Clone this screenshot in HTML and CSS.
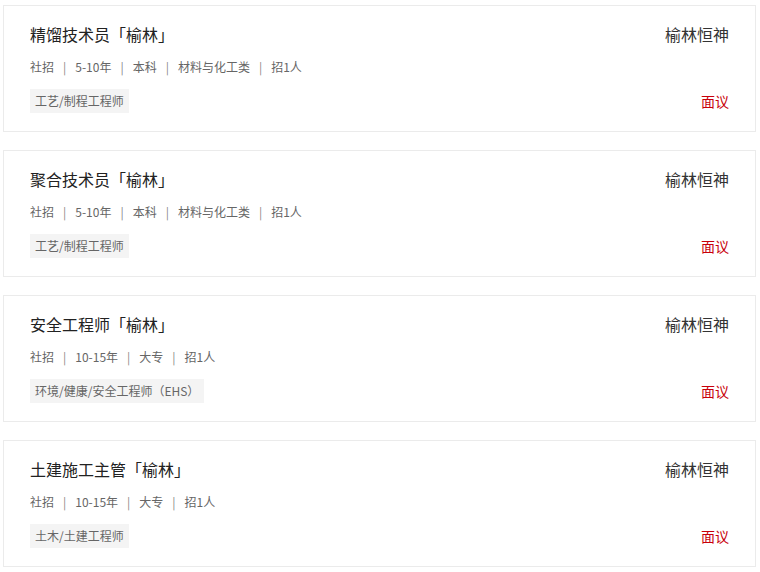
FILE: index.html
```html
<!DOCTYPE html>
<html lang="zh">
<head>
<meta charset="utf-8">
<link rel="stylesheet" href="styles.css">
</head>
<body>
<div class="list">
  <div class="card">
    <div class="row">
      <div class="title">精馏技术员「榆林」</div>
      <div class="company">榆林恒神</div>
    </div>
    <div class="meta"><span>社招</span><i>|</i><span>5-10年</span><i>|</i><span>本科</span><i>|</i><span>材料与化工类</span><i>|</i><span>招1人</span></div>
    <div class="row bottom">
      <span class="tag">工艺/制程工程师</span>
      <span class="salary">面议</span>
    </div>
  </div>
  <div class="card">
    <div class="row">
      <div class="title">聚合技术员「榆林」</div>
      <div class="company">榆林恒神</div>
    </div>
    <div class="meta"><span>社招</span><i>|</i><span>5-10年</span><i>|</i><span>本科</span><i>|</i><span>材料与化工类</span><i>|</i><span>招1人</span></div>
    <div class="row bottom">
      <span class="tag">工艺/制程工程师</span>
      <span class="salary">面议</span>
    </div>
  </div>
  <div class="card">
    <div class="row">
      <div class="title">安全工程师「榆林」</div>
      <div class="company">榆林恒神</div>
    </div>
    <div class="meta"><span>社招</span><i>|</i><span>10-15年</span><i>|</i><span>大专</span><i>|</i><span>招1人</span></div>
    <div class="row bottom">
      <span class="tag">环境/健康/安全工程师（EHS）</span>
      <span class="salary">面议</span>
    </div>
  </div>
  <div class="card">
    <div class="row">
      <div class="title">土建施工主管「榆林」</div>
      <div class="company">榆林恒神</div>
    </div>
    <div class="meta"><span>社招</span><i>|</i><span>10-15年</span><i>|</i><span>大专</span><i>|</i><span>招1人</span></div>
    <div class="row bottom">
      <span class="tag">土木/土建工程师</span>
      <span class="salary">面议</span>
    </div>
  </div>
</div>
</body>
</html>
```
FILE: styles.css
```css
html, body {
  margin: 0;
  padding: 0;
  background: #fff;
}
body {
  font-family: "Noto Sans CJK SC", "Noto Sans", "Liberation Sans", sans-serif;
  color: #333;
}
.list {
  padding: 5px 4px 0 3px;
  display: flex;
  flex-direction: column;
  gap: 18px;
}
.card {
  box-sizing: border-box;
  height: 127px;
  border: 1px solid #ebebeb;
  padding: 16px 26px 0 26px;
  display: flex;
  flex-direction: column;
}
.row {
  display: flex;
  justify-content: space-between;
  align-items: center;
  height: 24px;
}
.title {
  font-size: 16px;
  line-height: 24px;
  color: #222;
}
.company {
  font-size: 16px;
  line-height: 24px;
  color: #333;
}
.meta {
  margin-top: 11px;
  font-size: 12px;
  line-height: 20px;
  height: 20px;
  color: #666;
  display: flex;
}
.meta i {
  font-style: normal;
  margin: 0 9px;
  color: #888;
}
.bottom {
  margin-top: 12px;
}
.tag {
  display: inline-block;
  background: #f4f4f4;
  color: #666;
  font-size: 12px;
  line-height: 24px;
  height: 24px;
  padding: 0 5px;
}
.salary {
  font-size: 14px;
  line-height: 24px;
  color: #c8000a;
}
```
